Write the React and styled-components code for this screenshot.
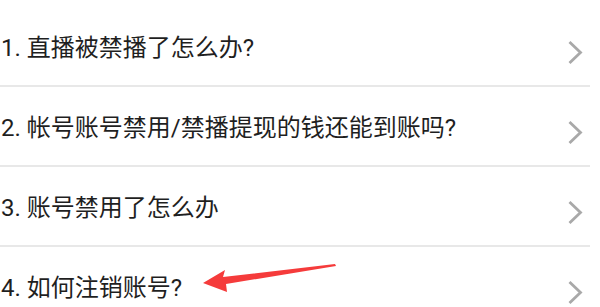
import React from "react";
import styled, { createGlobalStyle } from "styled-components";

const GlobalStyle = createGlobalStyle`
  html, body {
    margin: 0;
    padding: 0;
    background: #ffffff;
  }
  body {
    font-family: Roboto, "Noto Sans CJK SC", "Noto Sans", sans-serif;
  }
`;

const Page = styled.div`
  position: relative;
  width: 600px;
  height: 307px;
  overflow: hidden;
  background: #fff;
`;

const List = styled.ul`
  list-style: none;
  margin: 0;
  padding: 7px 0 0 0;
  width: 590px;
`;

const Row = styled.li`
  display: flex;
  align-items: center;
  justify-content: space-between;
  height: 78px;
  border-bottom: 2px solid ${(p) => (p.last ? "transparent" : "#e8e8e8")};
  padding-left: 1px;
`;

const Question = styled.span`
  font-size: 24px;
  color: #1f1f1f;
  letter-spacing: 0;
  white-space: nowrap;
  margin-top: -2px;
`;

const Chevron = styled.svg`
  width: 16px;
  height: 25px;
  margin-right: 7px;
  margin-top: 12px;
  flex-shrink: 0;
`;

const Pointer = styled.svg`
  position: absolute;
  left: 200px;
  top: 260px;
  width: 140px;
  height: 36px;
`;

const questions = [
  "1. 直播被禁播了怎么办?",
  "2. 帐号账号禁用/禁播提现的钱还能到账吗?",
  "3. 账号禁用了怎么办",
  "4. 如何注销账号?",
];

export default function App() {
  return (
    <Page>
      <GlobalStyle />
      <List>
        {questions.map((q, i) => (
          <Row key={i} last={i === questions.length - 1}>
            <Question>{q}</Question>
            <Chevron viewBox="0 0 16 25">
              <polyline
                points="2.5,2 13.5,12.5 2.5,23"
                fill="none"
                stroke="#a9a9a9"
                strokeWidth="2.8"
              />
            </Chevron>
          </Row>
        ))}
      </List>
      {/* red arrow pointing at item 4 */}
      <Pointer viewBox="200 260 140 36">
        <polygon
          points="203,283 225,270 223,277 335,264 336,266 226,284 227,292"
          fill="#f53b3b"
        />
      </Pointer>
    </Page>
  );
}
